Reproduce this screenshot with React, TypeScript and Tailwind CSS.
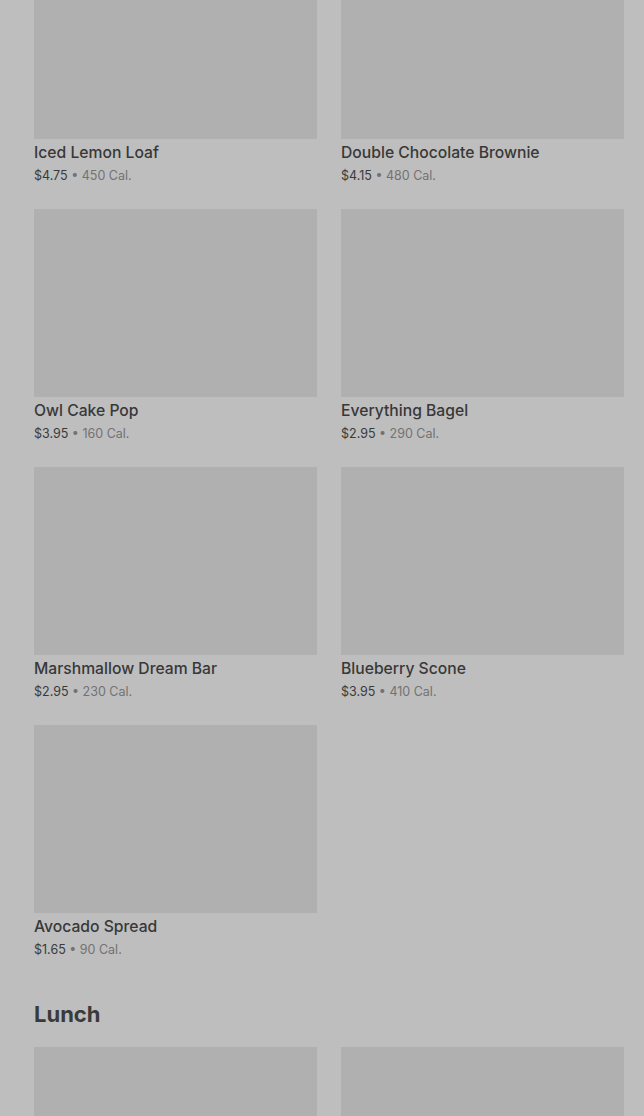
import React from "react";

type Item = { name: string; price: string; cal: string };

const bakery: Item[] = [
  { name: "Iced Lemon Loaf", price: "$4.75", cal: "450 Cal." },
  { name: "Double Chocolate Brownie", price: "$4.15", cal: "480 Cal." },
  { name: "Owl Cake Pop", price: "$3.95", cal: "160 Cal." },
  { name: "Everything Bagel", price: "$2.95", cal: "290 Cal." },
  { name: "Marshmallow Dream Bar", price: "$2.95", cal: "230 Cal." },
  { name: "Blueberry Scone", price: "$3.95", cal: "410 Cal." },
  { name: "Avocado Spread", price: "$1.65", cal: "90 Cal." },
];

function ProductCard({ item }: { item?: Item }) {
  return (
    <div className="flex flex-col">
      <div className="h-[188px] w-full bg-[#b0b0b0]" />
      {item && (
        <div className="pt-[4px]">
          <p className="text-[15.7px] leading-[20px] font-medium text-[#383838]">{item.name}</p>
          <p className="mt-[3px] text-[12.5px] leading-[20px] text-[#3a3a3a]">
            {item.price} <span className="text-[#727272]">• {item.cal}</span>
          </p>
        </div>
      )}
    </div>
  );
}

export default function App() {
  return (
    <div
      className="min-h-[1116px] overflow-hidden bg-[#bebebe] pl-[34px] pr-[20px]"
      style={{ fontFamily: "Inter, 'Noto Sans', sans-serif" }}
    >
      <div className="-mt-[49px] grid grid-cols-2 gap-x-[24px] gap-y-[23px]">
        {bakery.map((item) => (
          <ProductCard key={item.name} item={item} />
        ))}
      </div>

      <h2 className="mt-[38px] text-[22px] leading-[32px] font-bold text-[#3a3a3a]">Lunch</h2>

      <div className="mt-[17px] grid grid-cols-2 gap-x-[24px]">
        <ProductCard />
        <ProductCard />
      </div>
    </div>
  );
}
